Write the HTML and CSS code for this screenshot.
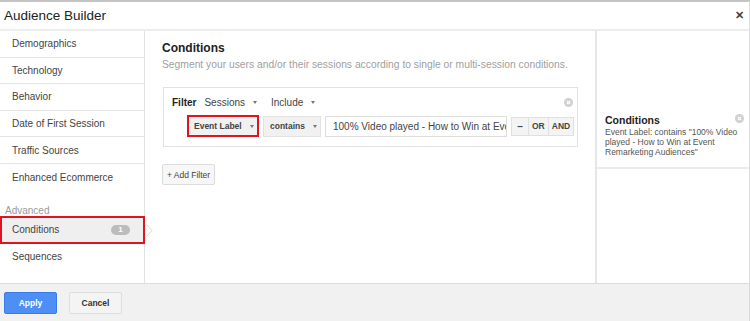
FILE: index.html
```html
<!DOCTYPE html>
<html>
<head>
<meta charset="utf-8">
<link rel="stylesheet" href="styles.css">
</head>
<body>
<div class="dialog">
  <div class="header">
    <span class="title">Audience Builder</span>
    <span class="close">&#x2715;</span>
  </div>
  <div class="body">
    <div class="sidebar">
      <div class="nav-group">
        <div class="nav-item">Demographics</div>
        <div class="nav-item">Technology</div>
        <div class="nav-item">Behavior</div>
        <div class="nav-item">Date of First Session</div>
        <div class="nav-item">Traffic Sources</div>
        <div class="nav-item last">Enhanced Ecommerce</div>
      </div>
      <div class="section-label">Advanced</div>
      <div class="nav-item selected">
        <span>Conditions</span>
        <span class="badge">1</span>
        <svg class="chevron" width="7" height="13" viewBox="0 0 7 13"><polyline points="0.5,0.5 6,6.5 0.5,12.5" fill="none" stroke="#d6d6d6" stroke-width="1"/></svg>
      </div>
      <div class="nav-item last">Sequences</div>
    </div>
    <div class="main">
      <div class="main-title">Conditions</div>
      <div class="main-sub">Segment your users and/or their sessions according to single or multi-session conditions.</div>
      <div class="filter-box">
        <div class="filter-head">
          <span class="filter-label">Filter</span>
          <span class="dd-text">Sessions <span class="caret"></span></span>
          <span class="dd-text">Include <span class="caret"></span></span>
          <span class="filter-x"><svg width="9" height="9" viewBox="0 0 9 9"><circle cx="4.5" cy="4.5" r="4.5" fill="#d0d0d0"/><path d="M2.8 2.8 L6.2 6.2 M6.2 2.8 L2.8 6.2" stroke="#fff" stroke-width="1.2"/></svg></span>
        </div>
        <div class="filter-row">
          <div class="select select-event"><span>Event Label</span><span class="caret"></span></div>
          <div class="select select-op"><span>contains</span><span class="caret"></span></div>
          <div class="input">100% Video played - How to Win at Event Remarketing Audiences</div>
          <div class="btn-group">
            <span class="gbtn minus">&#8211;</span>
            <span class="gbtn">OR</span>
            <span class="gbtn">AND</span>
          </div>
        </div>
      </div>
      <button class="add-filter">+ Add Filter</button>
    </div>
    <div class="summary">
      <div class="summary-card">
        <div class="summary-title">Conditions</div>
        <div class="summary-text">Event Label: contains "100% Video played - How to Win at Event Remarketing Audiences"</div>
        <span class="summary-x"><svg width="9" height="9" viewBox="0 0 9 9"><circle cx="4.5" cy="4.5" r="4.5" fill="#d0d0d0"/><path d="M2.8 2.8 L6.2 6.2 M6.2 2.8 L2.8 6.2" stroke="#fff" stroke-width="1.2"/></svg></span>
      </div>
    </div>
  </div>
  <div class="footer">
    <button class="btn-apply">Apply</button>
    <button class="btn-cancel">Cancel</button>
  </div>
</div>
</body>
</html>
```

FILE: styles.css
```css
* { box-sizing: border-box; }
html, body { margin: 0; padding: 0; background: #fff; }
body { font-family: "Liberation Sans", Arial, sans-serif; color: #333; }

.dialog {
  width: 750px;
  height: 321px;
  border-top: 2px solid #c4c4c4;
  border-right: 1px solid #dcdcdc;
  display: flex;
  flex-direction: column;
  overflow: hidden;
}

.header {
  height: 29px;
  flex: none;
  border-bottom: 2px solid #ececec;
  display: flex;
  align-items: center;
  justify-content: space-between;
  padding: 0 5px 1px 4px;
}
.title { font-size: 13.5px; color: #222; }
.close { font-size: 11px; font-weight: bold; color: #444; }

.body {
  flex: 1;
  display: flex;
  min-height: 0;
  border-bottom: 1px solid #dcdcdc;
}

.sidebar {
  width: 145px;
  flex: none;
  border-right: 1px solid #e2e2e2;
  display: flex;
  flex-direction: column;
}
.nav-item {
  height: 26.6px;
  flex: none;
  border-bottom: 1px solid #e6e6e6;
  font-size: 10px;
  color: #444;
  padding-left: 12px;
  display: flex;
  align-items: center;
  position: relative;
  white-space: nowrap;
}
.nav-item.last { border-bottom: none; }
.section-label {
  margin-top: 14px;
  padding-left: 5px;
  font-size: 10px;
  color: #9a9a9a;
  height: 11px;
  line-height: 11px;
}
.nav-item.selected {
  height: 28px;
  background: #efefef;
  border: 2px solid #e0141e;
  padding-left: 10px;
  margin-right: -1px;
}
.badge {
  position: absolute;
  left: 109px;
  top: 7px;
  width: 19px;
  height: 10px;
  border-radius: 5px;
  background: #bcbcbc;
  color: #fff;
  font-size: 8px;
  font-weight: bold;
  text-align: center;
  line-height: 10px;
}
.chevron {
  position: absolute;
  right: -10px;
  top: 6px;
}

.main {
  flex: 1;
  padding: 9px 18px 0 17px;
  border-right: 2px solid #e6e6e6;
  min-width: 0;
}
.main-title { font-size: 12px; font-weight: bold; color: #222; line-height: 16px; }
.main-sub { font-size: 10.3px; color: #a0a0a0; margin-top: 2px; line-height: 14px; white-space: nowrap; }

.filter-box {
  margin-top: 15px;
  margin-left: 1px;
  width: 415px;
  height: 60px;
  border: 1px solid #e2e2e2;
  padding: 6px 8px 0 8px;
}
.filter-head {
  display: flex;
  align-items: center;
  height: 16px;
  font-size: 10px;
  color: #444;
}
.filter-label { font-weight: bold; color: #222; margin-right: 8px; }
.dd-text { margin-right: 14px; display: inline-flex; align-items: center; }
.caret {
  display: inline-block;
  flex: none;
  width: 0; height: 0;
  border-left: 2.5px solid transparent;
  border-right: 2.5px solid transparent;
  border-top: 3px solid #777;
  margin-left: 8px;
}
.filter-x { margin-left: auto; margin-right: -4px; display: flex; }

.filter-row {
  display: flex;
  align-items: center;
  margin-top: 5px;
  margin-left: 15px;
  height: 22px;
}
.select {
  flex: none;
  height: 21px;
  background: #f1f1f1;
  border: 1px solid #e2e2e2;
  font-size: 8.5px;
  font-weight: bold;
  color: #444;
  display: flex;
  align-items: center;
  justify-content: space-between;
  padding: 0 6px 0 6px;
  margin-right: 4px;
  white-space: nowrap;
}
.select-event { width: 72px; height: 22px; border: 2px solid #e0141e; padding-left: 5px; margin-right: 4px; }
.select-op { width: 58px; }
.input {
  flex: none;
  width: 182px;
  height: 21px;
  border: 1px solid #ddd;
  font-size: 10px;
  color: #444;
  padding: 0 7px;
  line-height: 19px;
  white-space: nowrap;
  overflow: hidden;
  margin-right: 4px;
}
.btn-group {
  flex: none;
  display: flex;
  height: 19px;
  border: 1px solid #e0e0e0;
  background: #f4f4f4;
}
.gbtn {
  font-size: 8.5px;
  font-weight: bold;
  color: #444;
  display: flex;
  align-items: center;
  justify-content: center;
  padding: 0 3px;
  border-left: 1px solid #e0e0e0;
  min-width: 19px;
  white-space: nowrap;
}
.gbtn:first-child { border-left: none; }
.gbtn.minus { width: 16px; min-width: 16px; font-size: 10px; }

.add-filter {
  margin-top: 17px;
  height: 21px;
  width: 53px;
  padding: 0;
  border: 1px solid #dcdcdc;
  border-radius: 2px;
  background: #f7f7f7;
  font-family: inherit;
  font-size: 8.5px;
  color: #444;
}

.summary {
  width: 152px;
  flex: none;
  padding-top: 81px;
}
.summary-card {
  position: relative;
  padding: 2px 6px 10px 8px;
  border-bottom: 2px solid #ececec;
}
.summary-title { font-size: 10.5px; font-weight: bold; color: #222; line-height: 13px; }
.summary-text { font-size: 8.5px; color: #555; line-height: 10px; }
.summary-x { position: absolute; right: 5px; top: 2px; display: flex; }

.footer {
  height: 37px;
  flex: none;
  background: #f1f1f1;
  display: flex;
  align-items: center;
  padding: 0 0 0 4px;
}
.btn-apply {
  width: 53px;
  height: 22px;
  background: #4d8ff5;
  border: 1px solid #3b7be6;
  border-radius: 2px;
  color: #fff;
  font-family: inherit;
  font-size: 8.5px;
  font-weight: bold;
  padding: 0;
}
.btn-cancel {
  margin-left: 12px;
  width: 53px;
  height: 22px;
  background: #f4f4f4;
  border: 1px solid #dedede;
  border-radius: 2px;
  color: #333;
  font-family: inherit;
  font-size: 8.5px;
  font-weight: bold;
  padding: 0;
}
```
